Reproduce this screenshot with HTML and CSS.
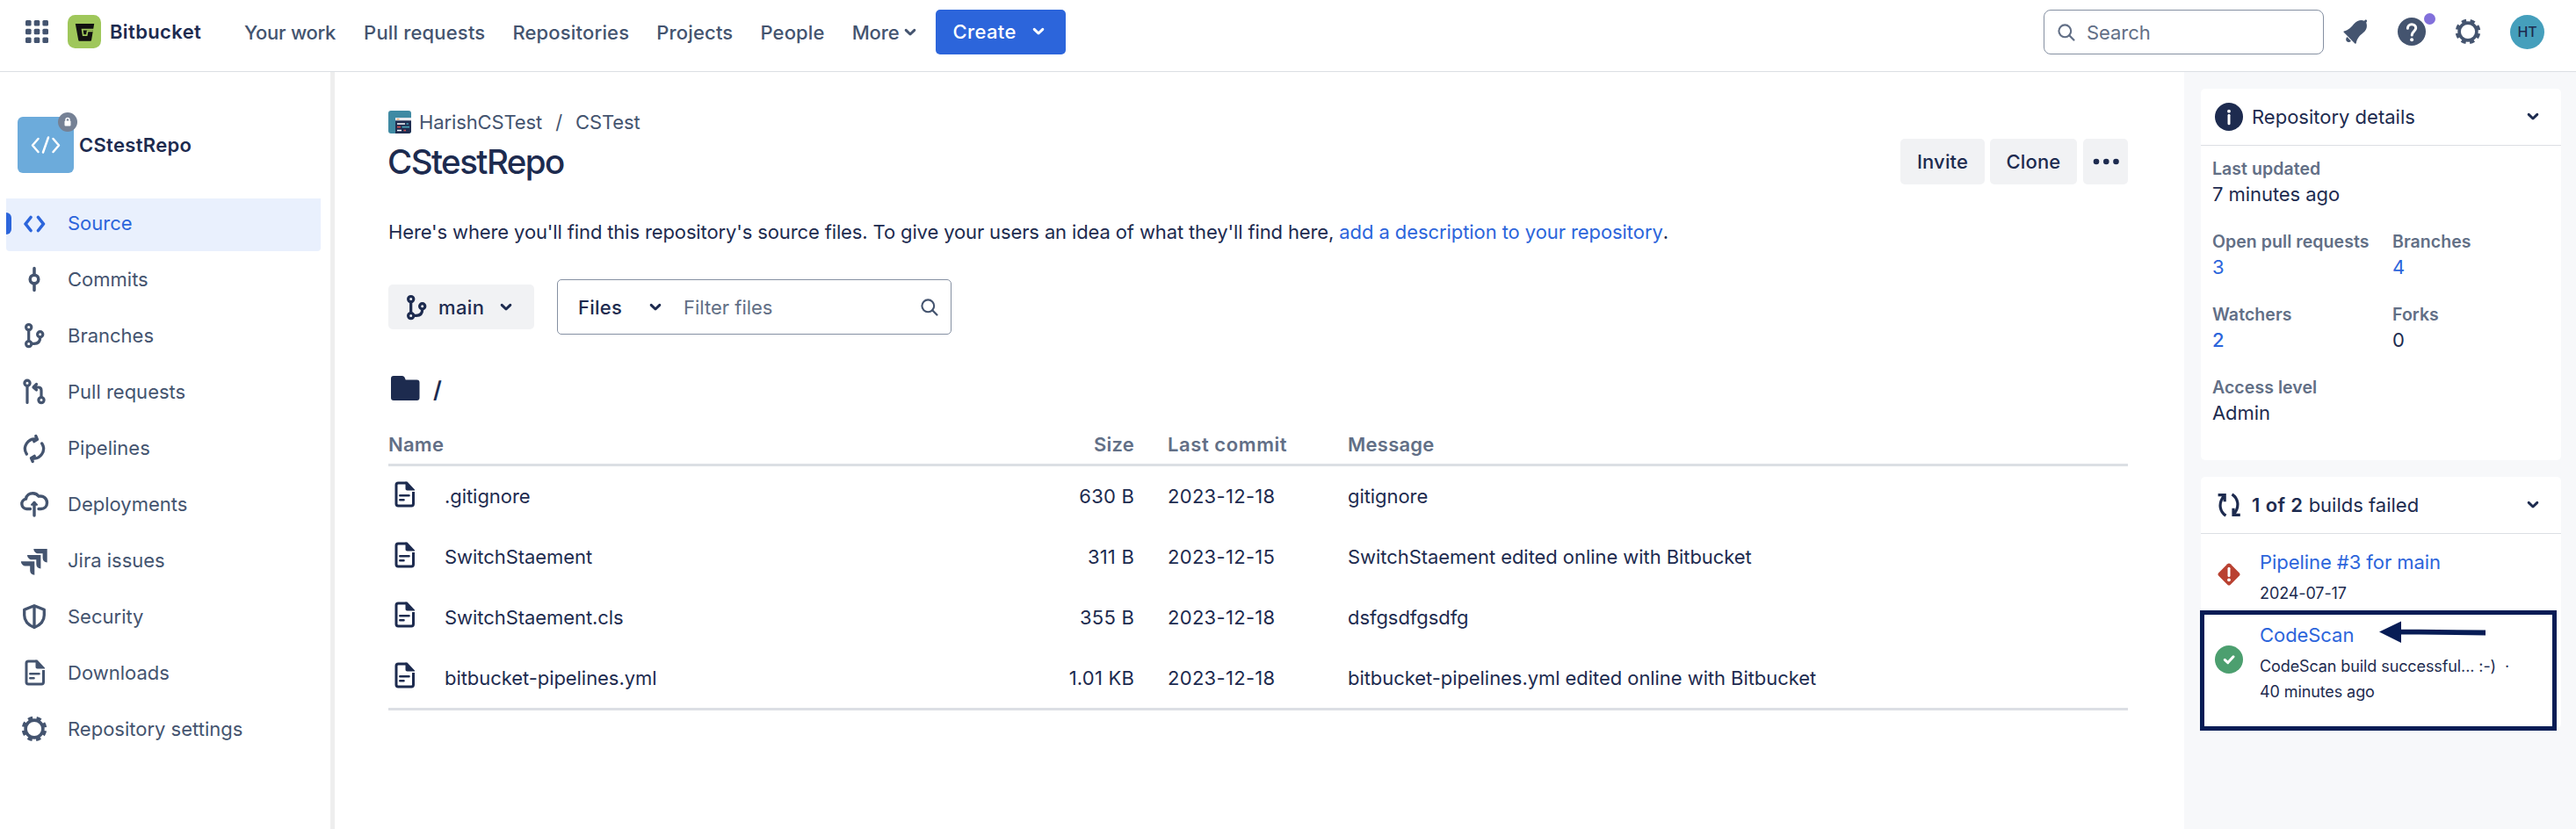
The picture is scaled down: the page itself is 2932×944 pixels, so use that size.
FILE: index.html
```
<!DOCTYPE html>
<html lang="en">
<head>
<meta charset="utf-8">
<title>CStestRepo — Bitbucket</title>
<link rel="stylesheet" href="styles.css">
</head>
<body>
<svg class="defs" aria-hidden="true">
  <symbol id="chevron" viewBox="0 0 14 10"><path d="M2.2 2.4 7 7l4.8-4.6" fill="none" stroke="currentColor" stroke-width="3" stroke-linecap="round" stroke-linejoin="round"/></symbol>
  <symbol id="search" viewBox="0 0 20 20"><circle cx="8.3" cy="8.3" r="6.9" fill="none" stroke="currentColor" stroke-width="2.1"/><path d="m13.2 13.2 5.2 5.3" stroke="currentColor" stroke-width="2.3" stroke-linecap="round"/></symbol>
  <symbol id="gear" viewBox="0 0 40 40"><circle cx="20" cy="20" r="9.9" fill="none" stroke="currentColor" stroke-width="3.6"/><circle cx="20" cy="20" r="12.3" fill="none" stroke="currentColor" stroke-width="4" stroke-dasharray="5.2 4.46" stroke-dashoffset="-2.230"/></symbol>
  <symbol id="branch" viewBox="0 0 40 40"><g fill="none" stroke="currentColor" stroke-width="3.2" stroke-linecap="round"><circle cx="13.7" cy="10.6" r="3.1"/><circle cx="13.7" cy="29.6" r="3.1"/><circle cx="26.7" cy="18.7" r="3.1"/><path d="M13.7 14v12M17.5 29.4H20c4.500 0 6.600-2.400 6.700-7"/></g></symbol>
  <symbol id="file" viewBox="0 0 24 30"><path d="M13.500 2H4.200C2.800 2 2 2.800 2 4.200V25.800C2 27.200 2.800 28 4.200 28H19.300c1.400 0 2.200-.8 2.200-2.200V12" fill="none" stroke="currentColor" stroke-width="3"/><path d="M12.500.6 14.500.6 23 9.400v1H14.500c-1.200 0-2-.8-2-2z" fill="currentColor"/><path d="M6.300 16.300H16.500M6.300 21.200H10.500" stroke="currentColor" stroke-width="2.600" stroke-linecap="round"/></symbol>
</svg>

<header class="topbar">
  <svg class="switcher" viewBox="0 0 26 26" fill="currentColor"><rect width="6.600" height="6.600" rx="1.500"/><rect x="9.700" width="6.600" height="6.600" rx="1.500"/><rect x="19.400" width="6.600" height="6.600" rx="1.500"/><rect y="9.700" width="6.600" height="6.600" rx="1.500"/><rect x="9.700" y="9.700" width="6.600" height="6.600" rx="1.500"/><rect x="19.400" y="9.700" width="6.600" height="6.600" rx="1.500"/><rect y="19.400" width="6.600" height="6.600" rx="1.500"/><rect x="9.700" y="19.400" width="6.600" height="6.600" rx="1.500"/><rect x="19.400" y="19.400" width="6.600" height="6.600" rx="1.500"/></svg>
  <svg class="logo" viewBox="0 0 38 38"><rect width="38" height="38" rx="8.500" fill="#9fc75b"/><path d="M8.800 10H30.200L27.100 28.400C27 29.200 26.500 29.700 25.700 29.700H13.600C12.800 29.700 12.300 29.200 12.200 28.400Z" fill="#111"/><path d="M30 16.700H16.600L17.700 23.200H21.700L22.600 18.500H28.800" fill="none" stroke="#9fc75b" stroke-width="1.700"/></svg>
  <span class="brand">Bitbucket</span>
  <nav class="mainnav">
    <a class="nav-work">Your work</a><a>Pull requests</a><a>Repositories</a><a>Projects</a><a>People</a>
    <a class="more">More<svg class="chev"><use href="#chevron"/></svg></a>
  </nav>
  <button class="create">Create<svg class="chev"><use href="#chevron"/></svg></button>
  <div class="search"><svg class="search-icon"><use href="#search"/></svg>Search</div>
  <svg class="bell" viewBox="0 0 28 28" fill="currentColor"><path d="M1 13.500C6 12.500 9.500 8.500 12.500 5 16 1 20.500.2 24 1.700l1.200-1.100c1-.7 2.500.6 1.700 1.800l-.7 1.300c1.600 4.200.6 8.300-3.700 11.800-3.600 3-7 6.300-7.700 11.600-.1.700-1 .8-1.500.3L.7 14.700C.2 14.200.3 13.600 1 13.500z"/><path d="M4.500 20 9 24.800C7.300 26.500 5 26.200 4 25 2.800 23.700 2.900 21.500 4.500 20z"/></svg>
  <div class="help">
    <svg viewBox="0 0 32 32"><circle cx="16" cy="16" r="16" fill="#44546f"/><path d="M11.400 12.200C11.400 9.500 13.400 7.800 16 7.800s4.700 1.700 4.700 4.200c0 3.400-4.500 3.900-4.500 8" fill="none" stroke="#fff" stroke-width="3" stroke-linecap="round"/><circle cx="16.100" cy="25.300" r="2" fill="#fff"/></svg>
    <i class="dot"></i>
  </div>
  <svg class="gear-top"><use href="#gear"/></svg>
  <span class="avatar">HT</span>
</header>

<div class="layout">
  <aside class="sidebar">
    <div class="repo">
      <div class="repo-avatar">
        <svg viewBox="0 0 64 64" fill="none" stroke="#fff" stroke-width="2.500" stroke-linecap="round" stroke-linejoin="round"><path d="m23.500 25-6.500 7.500 6.500 7.500M40.500 25l6.500 7.500-6.500 7.500M35 23.500 29 40.500"/></svg>
        <span class="lock"><svg viewBox="0 0 22 22"><rect x="7.500" y="9.500" width="7" height="6" rx="1" fill="#fff"/><path d="M9 10V8.400a2 2 0 0 1 4 0V10" fill="none" stroke="#fff" stroke-width="1.500"/></svg></span>
      </div>
      <b class="repo-name">CStestRepo</b>
    </div>
    <nav class="menu">
      <a class="item active"><svg viewBox="0 0 40 40"><path d="M16 13.500 10 21l6 7.500M24.500 13.500l6 7.500-6 7.500" fill="none" stroke="currentColor" stroke-width="3.600" stroke-linecap="round" stroke-linejoin="round"/></svg>Source</a>
      <a class="item"><svg viewBox="0 0 40 40" fill="none" stroke="currentColor" stroke-width="3.500" stroke-linecap="round"><circle cx="20" cy="20" r="4.800"/><path d="M20 7.500V14M20 26V32.500"/></svg>Commits</a>
      <a class="item"><svg><use href="#branch"/></svg>Branches</a>
      <a class="item"><svg viewBox="0 0 40 40" fill="none" stroke="currentColor" stroke-width="3.200" stroke-linecap="round" stroke-linejoin="round"><circle cx="12" cy="10.300" r="3.100"/><circle cx="28" cy="29.600" r="3.100"/><path d="M12 14V32.500M28 26V18.500C28 16 26.800 15 24.500 15H20M22.500 11.500 19 15l3.500 3"/></svg>Pull requests</a>
      <a class="item"><svg viewBox="0 0 40 40" fill="none" stroke="currentColor" stroke-width="3.300" stroke-linecap="round" stroke-linejoin="round"><path d="M11.300 27A11 11 0 0 1 22.500 10.200M21.800 6.500 23.500 10.400 19.800 12.700M28.700 15A11 11 0 0 1 17.500 31.800M18.200 35.500 16.500 31.600 20.200 29.300"/></svg>Pipelines</a>
      <a class="item"><svg viewBox="0 0 40 40" fill="none" stroke="currentColor" stroke-width="3.400" stroke-linecap="round" stroke-linejoin="round"><path d="M15.500 25.500H11.300A5.700 5.700 0 0 1 10.500 14.200C11 10 14.500 7.700 18.300 7.700 21.300 7.700 23.600 9 25 11.200 30.500 10 34.500 13.600 34.500 18.400 34.500 22.600 31.500 25.500 27.500 25.500H25"/><path d="M20 33V18.500"/><path d="M20 17.600 17 20.700H23Z" fill="currentColor" stroke-width="2"/></svg>Deployments</a>
      <a class="item"><svg viewBox="0 0 40 40" fill="currentColor"><g id="jira-wing"><path d="M19.300 7H34.700V22.600C31.500 22.400 29.700 20.300 29.600 17.500V12.300H24.800C21.800 12.200 19.500 10.200 19.300 7Z"/></g><use href="#jira-wing" x="-7.300" y="7"/><use href="#jira-wing" x="-14.400" y="14.200"/></svg>Jira issues</a>
      <a class="item"><svg viewBox="0 0 40 40" fill="none" stroke="currentColor" stroke-width="3.300" stroke-linejoin="round"><path d="M20 7.700 31.300 12.300V18.500C31.300 25 27.500 29.500 20 32.600 12.500 29.500 8.700 25 8.700 18.500V12.300ZM20 8V32"/></svg>Security</a>
      <a class="item"><svg class="doc"><use href="#file"/></svg>Downloads</a>
      <a class="item"><svg><use href="#gear"/></svg>Repository settings</a>
    </nav>
  </aside>

  <main class="content">
    <div class="crumbs">
      <svg class="crumb-icon" viewBox="0 0 26 26"><rect width="26" height="26" rx="3" fill="#3f8aa3"/><path d="M8 8h18v15a3 3 0 0 1-3 3H8z" fill="#1f2d50"/><path d="M8 8h18v3.300H8z" fill="#e8eaee"/><path d="M9.500 9.700h3" stroke="#e8a66a" stroke-width="1.300"/><path d="M10 15h9M10 22.500h5" stroke="#fff" stroke-width="1.500"/><path d="M20.500 15h2.500M15.500 18.700H24" stroke="#4aa3b5" stroke-width="1.700"/><path d="M10 18.700h4M17.500 22.500h2.500" stroke="#d65050" stroke-width="1.700"/></svg>
      <span>HarishCSTest</span><span class="sep">/</span><span>CSTest</span>
    </div>
    <div class="headline">
      <h1>CStestRepo</h1>
      <button class="btn invite">Invite</button>
      <button class="btn clone">Clone</button>
      <button class="btn dots"><svg viewBox="0 0 30 8" fill="currentColor"><circle cx="4" cy="4" r="3.300"/><circle cx="15.300" cy="4" r="3.300"/><circle cx="26.500" cy="4" r="3.300"/></svg></button>
    </div>
    <p class="desc">Here's where you'll find this repository's source files. To give your users an idea of what they'll find here, <a>add a description to your repository</a>.</p>
    <div class="tools">
      <button class="btn branch-btn"><svg class="branch-icon"><use href="#branch"/></svg>main<svg class="chev"><use href="#chevron"/></svg></button>
      <div class="filter"><span class="kind">Files</span><svg class="chev"><use href="#chevron"/></svg><span class="placeholder">Filter files</span><svg class="search-icon"><use href="#search"/></svg></div>
    </div>
    <div class="path"><svg viewBox="0 0 33 28" fill="currentColor"><path d="M3 0H12.500C14.500 0 15.300 1 16 2.800L16.700 4.600H29.500C31.500 4.600 32.500 5.600 32.500 7.600V25C32.500 27 31.500 28 29.500 28H3C1 28 0 27 0 25V3C0 1 1 0 3 0Z"/></svg><span>/</span></div>
    <div class="files">
      <div class="row head"><span class="name">Name</span><span class="size">Size</span><span class="date">Last commit</span><span>Message</span></div>
      <div class="row"><svg class="doc"><use href="#file"/></svg><span>.gitignore</span><span class="size">630 B</span><span class="date">2023-12-18</span><span>gitignore</span></div>
      <div class="row"><svg class="doc"><use href="#file"/></svg><span>SwitchStaement</span><span class="size">311 B</span><span class="date">2023-12-15</span><span>SwitchStaement edited online with Bitbucket</span></div>
      <div class="row"><svg class="doc"><use href="#file"/></svg><span>SwitchStaement.cls</span><span class="size">355 B</span><span class="date">2023-12-18</span><span>dsfgsdfgsdfg</span></div>
      <div class="row"><svg class="doc"><use href="#file"/></svg><span>bitbucket-pipelines.yml</span><span class="size">1.01 KB</span><span class="date">2023-12-18</span><span>bitbucket-pipelines.yml edited online with Bitbucket</span></div>
    </div>
  </main>

  <aside class="panel">
    <section class="card details">
      <div class="card-head">
        <svg class="info" viewBox="0 0 32 32"><circle cx="16" cy="16" r="16" fill="#1d2b4f"/><path d="M16 14.200V23.800" stroke="#fff" stroke-width="3" stroke-linecap="round"/><circle cx="16" cy="9.700" r="1.900" fill="#fff"/></svg>
        <span>Repository details</span><svg class="chev"><use href="#chevron"/></svg>
      </div>
      <dl class="facts">
        <div class="wide"><dt>Last updated</dt><dd>7 minutes ago</dd></div>
        <div><dt>Open pull requests</dt><dd class="link">3</dd></div>
        <div><dt>Branches</dt><dd class="link">4</dd></div>
        <div><dt>Watchers</dt><dd class="link strong">2</dd></div>
        <div><dt>Forks</dt><dd>0</dd></div>
        <div><dt>Access level</dt><dd>Admin</dd></div>
      </dl>
    </section>
    <section class="card builds">
      <div class="card-head">
        <svg class="info" viewBox="0 0 32 32" fill="none" stroke="#1d2b4f" stroke-width="3.200"><path d="M12.500 28.200C6 24 3 14.500 10.500 5.500M3.600 4.700H11.200V12.300M19.500 3.800C26 8 29 17.500 21.500 26.500M28.800 27.300H21V19.700"/></svg>
        <span><b>1 of 2</b> builds failed</span><svg class="chev"><use href="#chevron"/></svg>
      </div>
      <div class="build">
        <svg class="state" viewBox="0 0 32 32"><rect x="6.500" y="6.500" width="19" height="19" rx="2.500" transform="rotate(45 16 16)" fill="#b94131"/><path d="M16 9.300V17.500" stroke="#fff" stroke-width="3" stroke-linecap="round"/><circle cx="16" cy="22.300" r="1.900" fill="#fff"/></svg>
        <div><a>Pipeline #3 for main</a><p>2024-07-17</p></div>
      </div>
      <div class="build second">
        <svg class="state" viewBox="0 0 32 32"><circle cx="16" cy="16" r="16" fill="#4c9f6f"/><path d="m11.300 16.300 3.500 3.300 6.200-6.800" fill="none" stroke="#fff" stroke-width="3" stroke-linecap="round" stroke-linejoin="round"/></svg>
        <div><a>CodeScan</a><p>CodeScan build successful... :-) <span class="mid">·</span></p><p>40 minutes ago</p></div>
      </div>
      <div class="callout"><svg viewBox="0 0 122 26"><path d="M0 12.500 25 .5V25ZM24 9.500 121 10.500V16.500L24 15.300Z" fill="#071c55"/></svg></div>
    </section>
  </aside>
</div>
</body>
</html>
```
FILE: styles.css
```
* { box-sizing: border-box; }

body {
  margin: 0;
  width: 2932px;
  height: 944px;
  overflow: hidden;
  background: #fff;
  color: #1d2b4f;
  font: 400 22px/32px Inter, "Liberation Sans", sans-serif;
  letter-spacing: -0.06px;
}

button { border: 0; margin: 0; padding: 0; font: inherit; letter-spacing: inherit; color: inherit; }
h1, p, dl, dd { margin: 0; }
svg { display: block; flex: none; }
.defs { position: absolute; width: 0; height: 0; }
.chev { width: 14px; height: 10px; }
.search-icon { width: 20px; height: 20px; }

/* Top bar */
.topbar {
  height: 82px;
  padding: 0 36px 9px 29px;
  display: flex;
  align-items: center;
  border-bottom: 1px solid #dcdfe4;
  color: #44546f;
}
.switcher { width: 26px; height: 26px; }
.logo { width: 38px; height: 38px; margin-left: 22px; }
.brand { margin-left: 10px; width: 153px; font-weight: 600; letter-spacing: 0.36px; color: #1d2b4f; }
.mainnav { display: flex; gap: 31px; padding-top: 2px; font-weight: 500; letter-spacing: 0.17px; }
.nav-work { letter-spacing: -0.28px; padding-right: 1px; }
.more { display: flex; align-items: center; gap: 6px; letter-spacing: -0.15px; }
.create {
  display: flex;
  align-items: center;
  gap: 18px;
  width: 148px;
  height: 51px;
  margin-left: 22px;
  padding-left: 19px;
  border-radius: 5px;
  background: #2c65db;
  color: #fff;
  font-weight: 500;
  letter-spacing: 0.37px;
}
.search {
  display: flex;
  align-items: center;
  gap: 13px;
  width: 319px;
  height: 51px;
  margin-left: auto;
  padding: 1px 0 0 15px;
  border: 1px solid #8590a2;
  border-radius: 8px;
  color: #626f86;
}
.bell { width: 28px; height: 28px; margin-left: 22px; }
.help { position: relative; width: 32px; margin-left: 34px; }
.help svg { width: 32px; height: 32px; }
.dot { position: absolute; left: 28px; top: -7px; width: 17px; height: 17px; border: 2px solid #fff; border-radius: 50%; background: #8270db; }
.gear-top { width: 40px; height: 40px; margin-left: 28px; }
.avatar {
  width: 39px;
  height: 39px;
  margin-left: 28px;
  border-radius: 50%;
  background: #459fbc;
  color: #1d2b4f;
  font-size: 16px;
  font-weight: 500;
  line-height: 38px;
  text-align: center;
}

.layout { display: flex; height: 862px; }

/* Sidebar */
.sidebar { width: 381px; padding: 51px 11px 0 7px; border-right: 5px solid #eee; }
.repo { display: flex; align-items: center; gap: 6px; padding-left: 13px; }
.repo-avatar { position: relative; width: 64px; height: 64px; border-radius: 6px; background: #6cabdb; }
.repo-avatar > svg { width: 64px; height: 64px; }
.lock { position: absolute; left: 46px; top: -5px; width: 22px; height: 22px; border-radius: 50%; background: #758195; }
.repo-name { font-weight: 600; letter-spacing: 0.3px; }
.menu { display: grid; gap: 4px; margin-top: 29px; color: #44546f; letter-spacing: 0; }
.item { display: flex; align-items: center; gap: 18px; height: 60px; padding: 0 0 4px 12px; }
.item svg { width: 40px; height: 40px; }
.item .doc { width: 24px; height: 30px; margin: 0 7px 0 9px; }
.active { position: relative; border-radius: 0 0 4px 4px; color: #2c65db; background: #e9f0fd; }
.active::before { content: ""; position: absolute; left: 0; top: 16px; width: 6px; height: 25px; border-radius: 0 6px 6px 0; background: #2c65db; }

/* Repository content */
.content { width: 2105px; padding: 41px 64px 0 61px; }
.crumbs { display: flex; align-items: center; height: 32px; color: #44546f; letter-spacing: -0.12px; }
.crumb-icon { width: 26px; height: 26px; margin-right: 9px; }
.sep { margin: 0 15px; }
.headline { display: flex; align-items: center; height: 52px; margin-top: 3px; }
h1 { flex: 1; font-size: 38.500px; line-height: 52px; font-weight: 500; letter-spacing: -1.57px; margin-left: -1px; }
.btn { display: flex; align-items: center; justify-content: center; height: 52px; border-radius: 5px; background: #f1f2f4; font-weight: 500; letter-spacing: 0.15px; }
.invite { width: 96px; margin-right: 6px; }
.clone { width: 99px; margin-right: 7px; }
.dots { width: 51px; }
.dots svg { width: 30px; height: 8px; }
.desc { margin-top: 38px; letter-spacing: -0.127px; }
.desc a { letter-spacing: -0.08px; }
.desc a, .link, .build a { color: #2c65db; }
.tools { display: flex; align-items: center; gap: 26px; height: 63px; margin-top: 38px; }
.branch-btn { width: 166px; height: 51px; justify-content: flex-start; padding-left: 12px; letter-spacing: 0.4px; }
.branch-icon { width: 40px; height: 40px; margin-right: 5px; }
.branch-btn .chev { margin-left: 18px; }
.filter { display: flex; align-items: center; width: 449px; height: 63px; padding: 0 14px 0 23px; border: 1px solid #8590a2; border-radius: 5px; }
.filter .search-icon { color: #44546f; }
.kind { width: 81px; font-weight: 500; letter-spacing: 0.26px; }
.placeholder { flex: 1; margin-left: 25px; color: #626f86; letter-spacing: 0; }
.path { display: flex; align-items: center; gap: 15px; height: 40px; margin-top: 41px; padding-left: 3px; }
.path svg { width: 33px; height: 28px; }
.path span { font-size: 26px; font-weight: 600; padding-top: 4px; }

.files { margin-top: 22px; border-bottom: 3px solid #dcdfe4; }
.row { display: grid; grid-template-columns: 64px 599px 186px 243px 1fr; align-items: center; height: 68.750px; }
.row .doc { width: 24px; height: 30px; margin: -5px 0 0 7px; }
.head { height: 47px; border-bottom: 3px solid #dcdfe4; color: #626f86; font-weight: 600; letter-spacing: 0.25px; }
.head .name { grid-column: span 2; }
.size { text-align: right; letter-spacing: 0.2px; }
.date { padding-left: 38px; letter-spacing: 0.3px; }
.head .date { letter-spacing: 0.58px; }

/* Details panel */
.panel { width: 446px; padding: 19px 17px 0 19px; background: #f7f8fa; }
.card { position: relative; background: #fff; border-radius: 5px; }
.details { height: 423px; }
.builds { height: 286px; margin-top: 19px; }
.card-head { display: flex; align-items: center; gap: 10px; height: 65px; padding: 0 25px 0 16px; border-bottom: 1px solid #dcdfe4; letter-spacing: 0; }
.card-head .chev { margin-left: auto; }
.card-head b { font-weight: 600; letter-spacing: 0.4px; }
.info, .state { width: 32px; height: 32px; }
.facts { display: grid; grid-template-columns: 205px 1fr; row-gap: 27px; padding: 13px 12px 13px 13px; }
.wide { grid-column: span 2; }
dt { font-size: 19.500px; line-height: 26px; font-weight: 600; letter-spacing: 0.06px; color: #626f86; }
dd { line-height: 30px; padding-top: 0.5px; height: 30px; }
.strong { font-weight: 500; }
.build { display: flex; align-items: center; gap: 19px; padding: 16px 0 0 16px; }
.build .state { margin-bottom: 6px; }
.build a { display: block; margin-bottom: 5px; }
.build p { font-size: 18px; line-height: 29px; letter-spacing: -0.1px; }
.second { padding-top: 17px; }
.second .state { margin-bottom: 7px; }
.mid { padding-left: 5px; }
.callout { position: absolute; left: -1px; top: 152px; width: 406px; height: 137px; border: 5px solid #071c55; }
.callout svg { position: absolute; left: 199px; top: 7px; width: 122px; height: 26px; }
```
